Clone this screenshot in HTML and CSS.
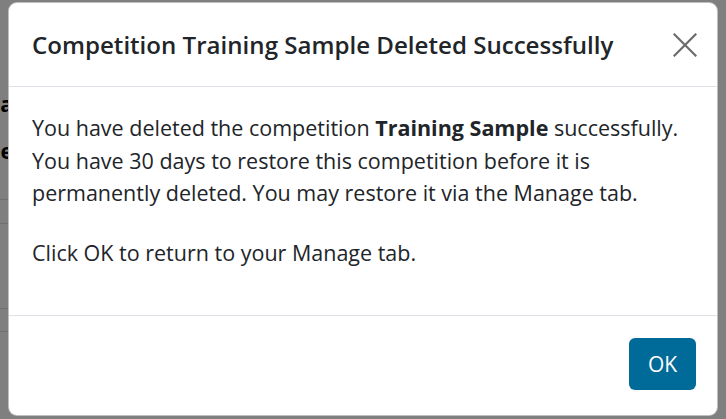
FILE: index.html
```html
<!DOCTYPE html>
<html lang="en">
<head>
<meta charset="utf-8">
<title>Competition Deleted</title>
<link rel="stylesheet" href="styles.css">
</head>
<body>
<div class="page">
  <div class="page-row page-row-head"><span class="cell-text">a</span></div>
  <div class="page-row page-row-head2"><span class="cell-text">e</span></div>
  <div class="page-rule rule-1"></div>
  <div class="page-rule rule-2"></div>
  <div class="page-rule rule-3"></div>
  <div class="page-rule rule-4"></div>
</div>
<div class="backdrop"></div>
<div class="modal" role="dialog" aria-labelledby="modal-title">
  <div class="modal-header">
    <h5 class="modal-title" id="modal-title">Competition Training Sample Deleted Successfully</h5>
    <button class="close" type="button" aria-label="Close">
      <svg width="24" height="24" viewBox="0 0 24 24" aria-hidden="true">
        <path d="M1.5 1.5 L22.5 22.5 M22.5 1.5 L1.5 22.5" stroke="#6c6c6c" stroke-width="2.2" fill="none" stroke-linecap="square"/>
      </svg>
    </button>
  </div>
  <div class="modal-body">
    <p>You have deleted the competition <strong>Training Sample</strong> successfully. You have 30 days to restore this competition before it is permanently deleted. You may restore it via the Manage tab.</p>
    <p>Click OK to return to your Manage tab.</p>
  </div>
  <div class="modal-footer">
    <button class="btn-ok" type="button">OK</button>
  </div>
</div>
</body>
</html>
```
FILE: styles.css
```css
* { box-sizing: border-box; }
html, body { margin: 0; padding: 0; }
body {
  width: 726px;
  height: 419px;
  overflow: hidden;
  background: #ffffff;
  font-family: "Open Sans", "Noto Sans", "Liberation Sans", sans-serif;
  color: #212529;
  position: relative;
}
.page {
  padding-top: 92px;
}
.page-row {
  display: flex;
  justify-content: flex-end;
  width: 13px;
  height: 24px;
  font-weight: 700;
  font-size: 21px;
  line-height: 24px;
  color: #000;
  white-space: nowrap;
}
.page-row-head2 { margin-top: 23px; }
.page-rule {
  height: 1px;
  width: 60px;
  background: #dcdcdc;
}
.rule-1 { margin-top: 36px; }
.rule-2 { margin-top: 23px; }
.rule-3 { margin-top: 84px; }
.rule-4 { margin-top: 22px; }

.backdrop {
  position: absolute;
  inset: 0;
  background: rgba(0, 0, 0, 0.5);
}
.modal {
  position: absolute;
  left: 8px;
  top: 2px;
  width: 710px;
  height: 414px;
  background: #fff;
  border: 1px solid rgba(0, 0, 0, 0.25);
  border-radius: 9px;
  display: flex;
  flex-direction: column;
  overflow: hidden;
}
.modal-header {
  height: 84px;
  flex: none;
  display: flex;
  align-items: center;
  justify-content: space-between;
  padding: 0 20px 0 23px;
  border-bottom: 1px solid #dee2e6;
}
.modal-title {
  margin: 0;
  font-size: 24.1px;
  font-weight: 600;
  line-height: 40px;
  color: #212529;
}
.close {
  border: 0;
  background: none;
  padding: 0;
  width: 24px;
  height: 24px;
  display: flex;
  cursor: pointer;
}
.modal-body {
  flex: 1;
  padding: 25px 23px 0 23px;
  font-size: 21.5px;
  line-height: 32.5px;
}
.modal-body p {
  margin: 0 0 27px 0;
}
.modal-body strong { font-weight: 700; }
.modal-footer {
  height: 100px;
  flex: none;
  border-top: 1px solid #dee2e6;
  display: flex;
  justify-content: flex-end;
  align-items: flex-start;
  padding: 22px 21px 0 0;
}
.btn-ok {
  width: 67px;
  height: 52px;
  border: 0;
  border-radius: 6px;
  background: #006a99;
  color: #fff;
  font-family: inherit;
  font-size: 21px;
  padding: 0;
}
```
